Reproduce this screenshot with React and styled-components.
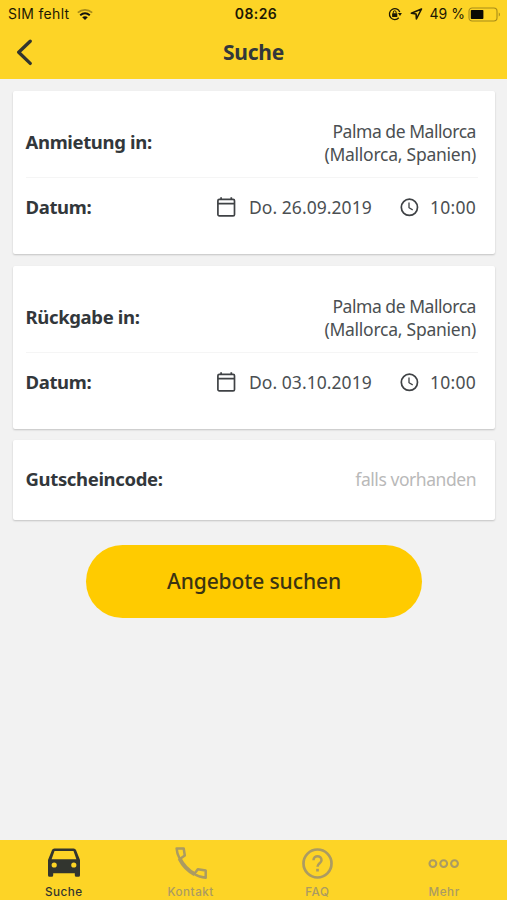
import React from "react";
import styled, { createGlobalStyle } from "styled-components";

const GlobalStyle = createGlobalStyle`
  * {
    box-sizing: border-box;
  }
  body {
    margin: 0;
    background: #f2f2f2;
  }
`;

const Screen = styled.div`
  display: flex;
  flex-direction: column;
  width: 507px;
  height: 900px;
  overflow: hidden;
  background: #f2f2f2;
  color: #32373b;
  font-family: "Noto Sans", sans-serif;
`;

const Header = styled.header`
  height: 79px;
  background: #fdd426;
`;

const StatusBar = styled.div`
  display: grid;
  grid-template-columns: 1fr auto 1fr;
  align-items: center;
  height: 27px;
  padding: 1px 6px 0 8px;
  color: #1c1804;
  font-family: Inter, sans-serif;
  font-size: 14px;
  line-height: 26px;
  white-space: nowrap;
`;

const StatusLeft = styled.div`
  display: flex;
  align-items: center;
  gap: 7px;
  letter-spacing: 0.3px;
`;

const Clock = styled.div`
  padding-left: 3px;
  font-weight: 600;
  letter-spacing: 0.4px;
`;

const StatusRight = styled.div`
  display: flex;
  align-items: center;
  justify-content: flex-end;
`;

const Percent = styled.span`
  margin: 0 3px 0 7px;
`;

const TitleBar = styled.div`
  display: grid;
  grid-template-columns: 60px 1fr 60px;
  align-items: center;
  height: 50px;
`;

const BackButton = styled.button`
  display: flex;
  padding: 0 0 0 15px;
  border: 0;
  background: none;
`;

const Title = styled.h1`
  margin: 0;
  font-size: 21px;
  font-weight: 700;
  line-height: 28px;
  text-align: center;
  letter-spacing: -0.2px;
`;

const Content = styled.main`
  display: flex;
  flex: 1;
  flex-direction: column;
  gap: 12px;
  padding: 12px 12px 0 13px;
`;

const Card = styled.section`
  padding: 17px 17px 16px 12.5px;
  border-radius: 2px;
  background: #fff;
  box-shadow: 0 1px 2px rgba(0, 0, 0, 0.2);
`;

const VoucherCard = styled(Card)`
  margin-top: -1px;
  padding-top: 10px;
  padding-bottom: 10px;
`;

const Row = styled.div`
  display: flex;
  align-items: center;
  justify-content: space-between;
  height: ${(props) => props.$height}px;
  padding: 0 2px 2px 0;
  border-bottom: ${(props) => (props.$divider ? "1px solid #f5f5f5" : "0")};
`;

const Label = styled.span`
  font-size: 18.5px;
  font-weight: 700;
  line-height: 24px;
  letter-spacing: -0.35px;
`;

const Place = styled.div`
  padding-top: 2px;
  color: #4b4f52;
  font-size: 17.5px;
  line-height: 23px;
  text-align: right;
`;

const PlaceLine = styled.div`
  letter-spacing: ${(props) => props.$spacing};
`;

const DateTime = styled.div`
  display: flex;
  align-items: center;
  color: #4b4f52;
  font-size: 17.5px;
  line-height: 24px;
  white-space: nowrap;
`;

const DateText = styled.span`
  width: 122px;
  margin: 0 28px 0 13px;
  letter-spacing: 0.05px;
`;

const TimeText = styled.span`
  width: 46px;
  margin-left: 11px;
  letter-spacing: 0.25px;
`;

const Placeholder = styled.span`
  color: #b9b9b9;
  font-size: 17.5px;
  letter-spacing: -0.45px;
`;

const SearchButton = styled.button`
  align-self: center;
  width: 336px;
  height: 73px;
  margin-top: 12.5px;
  padding: 0;
  border: 0;
  border-radius: 37px;
  background: #ffcb00;
  color: #3b3412;
  font-family: inherit;
  font-size: 21px;
  font-weight: 500;
  letter-spacing: -0.1px;
`;

const TabBar = styled.nav`
  display: grid;
  grid-template-columns: repeat(4, 1fr);
  height: 60px;
  background: #fdd426;
`;

const Tab = styled.div`
  display: flex;
  flex-direction: column;
  align-items: center;
  padding-left: 1px;
  color: ${(props) => (props.$active ? "#32352f" : "#ab9b62")};
`;

const TabIcon = styled.div`
  display: flex;
  align-items: center;
  justify-content: center;
  height: 43px;
  margin-top: 2px;
  padding-bottom: 1px;
`;

const TabLabel = styled.span`
  font-family: Inter, sans-serif;
  font-size: 11.7px;
  font-weight: 500;
  line-height: 14px;
  letter-spacing: 0.5px;
`;

const WifiIcon = () => (
  <svg width="18" height="13" viewBox="0 0 18 13" fill="none">
    <path d="M1.8 4.6C6 .9 12 .9 16.2 4.6" stroke="#a78b19" strokeWidth="1.7" />
    <path d="M4.2 7.2c2.9-2.4 6.7-2.4 9.6 0" stroke="#111" strokeWidth="2" />
    <path d="M6.2 9.3c1.7-1.4 3.9-1.4 5.6 0L9 12.1z" fill="#111" />
  </svg>
);

const LockIcon = () => (
  <svg width="14" height="14" viewBox="0 0 14 14" fill="none" stroke="#1c1804">
    <path d="M11.8 5A5.4 5.4 0 1 0 10.8 10.8" strokeWidth="1.3" />
    <path d="M9.9 6h4L12 9z" fill="#1c1804" stroke="none" />
    <rect x="4.1" y="6.2" width="5.2" height="3.9" rx=".5" fill="#1c1804" stroke="none" />
    <path d="M5.3 6.5V5.2a1.4 1.4 0 0 1 2.8 0v1.3" strokeWidth="1" />
  </svg>
);

const LocationIcon = () => (
  <svg width="13" height="12" viewBox="0 0 13 12" fill="none">
    <path d="M11.5 1 1.3 5.2l4.8.8.3 5z" stroke="#1c1804" strokeWidth="1.6" strokeLinejoin="round" />
  </svg>
);

const BatteryIcon = () => (
  <svg width="33" height="15" viewBox="0 0 33 15">
    <rect x="1" y="1" width="28" height="13" rx="3.2" fill="none" stroke="#a78b19" strokeWidth="1.1" />
    <rect x="2.8" y="2.9" width="12.6" height="9.2" rx=".8" fill="#0b0a04" />
    <path d="M30.8 5.4v4.2c1.5-.7 1.5-3.5 0-4.2z" fill="#a78b19" />
  </svg>
);

const BackIcon = () => (
  <svg width="18" height="27" viewBox="0 0 18 27" fill="none">
    <path d="M15.2 2.2 3.7 13.3l11.5 11.1" stroke="#32352f" strokeWidth="3.3" strokeLinecap="round" strokeLinejoin="round" />
  </svg>
);

const CalendarIcon = () => (
  <svg width="20" height="22" viewBox="0 0 20 22" fill="none" stroke="#3f4245" strokeWidth="1.7">
    <rect x="1.9" y="3.3" width="16.6" height="16.6" rx="1.4" />
    <path d="M1.9 7.7h16.6M5.1 1.3v2.4M15.3 1.3v2.4" />
  </svg>
);

const TimeIcon = () => (
  <svg width="20" height="20" viewBox="0 0 20 20" fill="none" stroke="#3f4245">
    <circle cx="10.4" cy="10.3" r="8.1" strokeWidth="1.7" />
    <path d="M10 5.6v5.1l3.7 2.2" strokeWidth="1.3" />
  </svg>
);

const CarIcon = () => (
  <svg width="34" height="34" viewBox="0 0 34 34">
    <path
      fill="currentColor"
      fillRule="evenodd"
      d="M7.4 2.4h19.2q1.8 0 2.4 1.7L33 13.9v15.3q0 1.5-1.5 1.5h-2.2q-1.5 0-1.5-1.5v-1.9H6.200v1.900q0 1.500-1.500 1.500H2.500Q1 30.700 1 29.200V13.900L5 4.100Q5.600 2.400 7.400 2.400zM7.500 4.900L4.600 13.200H29.400L26.500 4.900zM7.200 16.400a2.600 2.600 0 1 0 0 5.200a2.600 2.600 0 1 0 0-5.200zM26.800 16.400a2.600 2.600 0 1 0 0 5.200a2.600 2.600 0 1 0 0-5.200z"
    />
  </svg>
);

const PhoneIcon = () => (
  <svg width="34" height="34" viewBox="0 0 34 34" fill="none" stroke="currentColor" strokeWidth="2.5" strokeLinejoin="round">
    <path d="M3.500 2.500H9.700L10.800 9.500L5.800 13C4 9.800 2.800 6.300 2.600 2.500z" />
    <path d="M31.700 24.600V31.700C27.500 31.500 23.700 30.300 20.300 28L23.800 23.200z" />
    <path d="M5.600 12.700C9 19.500 14 24.700 20.700 28.300" strokeWidth="4" />
  </svg>
);

const HelpIcon = () => (
  <svg width="33" height="33" viewBox="0 0 33 33" fill="none" stroke="currentColor">
    <circle cx="16.5" cy="16.5" r="14" strokeWidth="2.7" />
    <path d="M12.5 13.2c0-5.2 8-5.2 8 0 0 3-4 3.2-4 6.6" strokeWidth="2.5" />
    <path d="M16.5 21.8v2.7" strokeWidth="2.7" />
  </svg>
);

const MoreIcon = () => (
  <svg width="34" height="12" viewBox="0 0 34 12" fill="none" stroke="currentColor" strokeWidth="2.1">
    <circle cx="5.9" cy="6.6" r="3.4" />
    <circle cx="16.7" cy="6.6" r="3.4" />
    <circle cx="27.5" cy="6.6" r="3.4" />
  </svg>
);

const BookingCard = ({ label, date, time }) => (
  <Card>
    <Row $height={70} $divider>
      <Label>{label}</Label>
      <Place>
        <PlaceLine $spacing="-0.45px">Palma de Mallorca</PlaceLine>
        <PlaceLine $spacing="-0.25px">(Mallorca, Spanien)</PlaceLine>
      </Place>
    </Row>
    <Row $height={60}>
      <Label>Datum:</Label>
      <DateTime>
        <CalendarIcon />
        <DateText>{date}</DateText>
        <TimeIcon />
        <TimeText>{time}</TimeText>
      </DateTime>
    </Row>
  </Card>
);

const App = () => {
  return (
    <Screen>
      <GlobalStyle />
      <Header>
        <StatusBar>
          <StatusLeft>
            <span>SIM fehlt</span>
            <WifiIcon />
          </StatusLeft>
          <Clock>08:26</Clock>
          <StatusRight>
            <LockIcon />
            <span>&nbsp;&nbsp;</span>
            <LocationIcon />
            <Percent>49 %</Percent>
            <BatteryIcon />
          </StatusRight>
        </StatusBar>
        <TitleBar>
          <BackButton aria-label="Zurück">
            <BackIcon />
          </BackButton>
          <Title>Suche</Title>
        </TitleBar>
      </Header>

      <Content>
        <BookingCard label="Anmietung in:" date="Do. 26.09.2019" time="10:00" />
        <BookingCard label="Rückgabe in:" date="Do. 03.10.2019" time="10:00" />
        <VoucherCard>
          <Row $height={60}>
            <Label>Gutscheincode:</Label>
            <Placeholder>falls vorhanden</Placeholder>
          </Row>
        </VoucherCard>
        <SearchButton>Angebote suchen</SearchButton>
      </Content>

      <TabBar>
        <Tab $active>
          <TabIcon>
            <CarIcon />
          </TabIcon>
          <TabLabel>Suche</TabLabel>
        </Tab>
        <Tab>
          <TabIcon>
            <PhoneIcon />
          </TabIcon>
          <TabLabel>Kontakt</TabLabel>
        </Tab>
        <Tab>
          <TabIcon>
            <HelpIcon />
          </TabIcon>
          <TabLabel>FAQ</TabLabel>
        </Tab>
        <Tab>
          <TabIcon>
            <MoreIcon />
          </TabIcon>
          <TabLabel>Mehr</TabLabel>
        </Tab>
      </TabBar>
    </Screen>
  );
};

export default App;
